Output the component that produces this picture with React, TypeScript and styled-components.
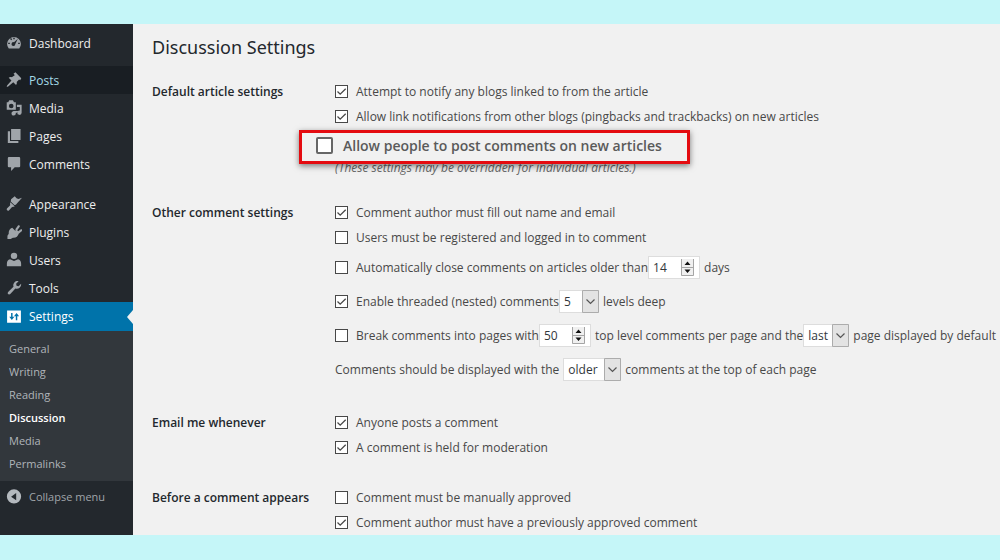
import React, { useId } from "react";
import styled, { createGlobalStyle, css } from "styled-components";

const GlobalStyle = createGlobalStyle`
  *, *::before, *::after { box-sizing: border-box; }
  body {
    margin: 0;
    background: #c5f6f8;
    color: #484848;
    font-family: "Open Sans", "Noto Sans", sans-serif;
    font-size: 12px;
  }
`;

const Page = styled.div`
  display: flex;
  min-height: 100vh;
  padding: 24px 0 25px;
`;

const Sidebar = styled.nav`
  flex: none;
  width: 133px;
  padding-top: 5px;
  background: #23282d;
`;

const MenuGroup = styled.ul<{ $gap: number }>`
  list-style: none;
  margin: 0 0 ${(p) => p.$gap}px;
  padding: 0;
`;

const MenuLink = styled.a<{ $state?: "hover" | "current" }>`
  position: relative;
  display: flex;
  align-items: center;
  gap: 7px;
  height: 28px;
  padding-left: 6px;
  color: #eee;
  text-decoration: none;
  svg { color: #a0a5aa; }
  ${(p) => p.$state === "hover" && css`
    background: #191e23;
    color: #a4dbe8;
  `}
  ${(p) => p.$state === "current" && css`
    height: 29px;
    background: #0073aa;
    color: #fff;
    svg { color: #fff; }
    &::after {
      content: "";
      position: absolute;
      right: 0;
      border: 7px solid transparent;
      border-left: 0;
      border-right: 6px solid #f1f1f1;
    }
  `}
`;

const SubMenu = styled.ul`
  list-style: none;
  margin: 0;
  padding: 6px 0 6px 9px;
  background: #32373c;
  font-size: 11px;
  line-height: 23px;
`;

const SubLink = styled.a<{ $current?: boolean }>`
  color: ${(p) => (p.$current ? "#fff" : "#b0b5ba")};
  font-weight: ${(p) => (p.$current ? 600 : 400)};
  text-decoration: none;
`;

const CollapseButton = styled.button`
  display: flex;
  align-items: center;
  gap: 7px;
  height: 31px;
  width: 100%;
  padding: 0 0 0 6px;
  border: 0;
  background: none;
  color: #a0a5aa;
  font: inherit;
  font-size: 11px;
  svg { color: #b4b9be; }
`;

const Content = styled.main`
  flex: 1;
  min-width: 0;
  padding: 11px 0 0 19px;
  background: #f1f1f1;
`;

const Title = styled.h1`
  margin: 0 0 20px;
  color: #23282d;
  font-family: "Noto Sans", sans-serif;
  font-size: 18px;
  font-weight: 400;
  line-height: 24px;
`;

const Section = styled.section<{ $gap?: number }>`
  display: grid;
  grid-template-columns: 183px 1fr;
  margin-bottom: ${(p) => p.$gap ?? 0}px;
`;

const SectionTitle = styled.h2`
  margin: 0;
  color: #23282d;
  font-size: 12px;
  font-weight: 600;
  line-height: 25px;
`;

const Row = styled.div<{ $tall?: boolean }>`
  display: flex;
  align-items: center;
  height: ${(p) => (p.$tall ? 34 : 25)}px;
  white-space: nowrap;
`;

const OptionLabel = styled.label`
  display: flex;
  align-items: center;
  gap: 8px;
`;

const BoxWrap = styled.span<{ $size: number }>`
  position: relative;
  display: block;
  width: ${(p) => p.$size}px;
  height: ${(p) => p.$size}px;
  input {
    appearance: none;
    display: block;
    width: 100%;
    height: 100%;
    margin: 0;
    border: ${(p) => (p.$size > 13 ? 2 : 1)}px solid ${(p) => (p.$size > 13 ? "#666" : "#484848")};
    border-radius: ${(p) => (p.$size > 13 ? 2 : 0)}px;
    background: #fff;
  }
  svg {
    position: absolute;
    inset: 0;
    pointer-events: none;
    visibility: hidden;
  }
  input:checked + svg { visibility: visible; }
`;

const HighlightRow = styled.div`
  position: relative;
  height: 27px;
`;

const Highlight = styled.label`
  position: absolute;
  top: 1px;
  left: -36px;
  display: flex;
  align-items: center;
  gap: 10px;
  width: 391px;
  height: 34px;
  padding: 0 0 4px 14px;
  border: 3px solid #e40b10;
  background: #f1f1f1;
  box-shadow: 0 2px 6px rgba(0, 0, 0, 0.5);
  color: #5a5a5a;
  font-size: 14px;
  font-weight: 600;
  white-space: nowrap;
`;

const Note = styled.p`
  margin: 0;
  color: #666;
  font-style: italic;
  line-height: 24px;
`;

const Field = styled.span<{ $width: number; $left?: number; $right?: number }>`
  position: relative;
  display: block;
  width: ${(p) => p.$width}px;
  height: 23px;
  margin: 0 ${(p) => p.$right ?? 4}px 0 ${(p) => p.$left ?? 0}px;
  input, select {
    appearance: none;
    display: block;
    width: 100%;
    height: 100%;
    margin: 0;
    padding: 0 4px;
    border: 1px solid #ddd;
    border-radius: 0;
    background: #fff;
    color: #32373c;
    font: inherit;
  }
  input { appearance: textfield; }
  input::-webkit-inner-spin-button { appearance: none; margin: 0; }
  svg {
    position: absolute;
    pointer-events: none;
  }
`;

const ICONS: Record<string, React.ReactNode> = {
  dashboard: (
    <path fillRule="evenodd" d="M2.800 18A9.500 9.500 0 1 1 17.200 18ZM9 3.200v2.300h2V3.200ZM4.600 5l1.600 1.600 1.300-1.300L5.900 3.700ZM2 10v2h2.300v-2ZM15.700 10v2H18v-2ZM15.300 4.600 10 9.400a2.600 2.600 0 1 0 1.800 2.400Z" />
  ),
  posts: <path d="M10.400 3 9.300 1.900 12 0l8 8-1.500 2.700-1.500-1-3.300 3.600c.5 1.600.1 3-.9 4.200l-3.800-3.800L2 19.500l-2 .5.500-2L6.500 11.200 2.700 7.400C3.900 6.400 5.400 6.100 6.900 6.600L11 4Z" />,
  media: (
    <path fillRule="evenodd" d="M0 2.500h2L3.500 0h5L10 2.500h2.500V13H0ZM6.200 4.500a3.200 3.200 0 1 0 0 6.400 3.200 3.200 0 0 0 0-6.400ZM14 6h6.500v11a3 3 0 1 1-2.500-3V9h-4ZM9 14.500h6V17h-2.500v1a3 3 0 1 1-3.500-3Z" />
  ),
  pages: <path d="M6 1h13v15H6ZM1.500 4h3v13.500h11.500v2.500h-14.500Z" />,
  comments: <path d="M3 1h14A1.500 1.500 0 0 1 18.500 2.500v11a1.500 1.500 0 0 1-1.500 1.500H11l-5 5v-5H3A1.500 1.500 0 0 1 1.500 13.500v-11A1.500 1.500 0 0 1 3 1Z" />,
  appearance: <path d="M6 4 11 0l2.500 2.500L16 3.500 21 2l-8.500 9.500-2 .5L5.500 7ZM5 8l6 5.500c-1.500 1.200-3 .5-4 1.500l-4 4.500c-1.500 1.300-4-1-2.700-2.700L4.500 12.500c.8-1-.5-2.500.5-4.500Z" />,
  plugins: <path d="m12 6.500 3.500-5c1-1.200 3.200.3 2.400 1.700l-3.400 5 1.300 1.300 3.700-2.700c1.300-.8 2.800 1.100 1.700 2.200l-4.700 4c-1 3.500-4 6-8 5.500L5.400 20H1v-4.500L2.800 13c-.5-3.500 1.200-6.800 4.800-8.200L12 9.200Z" />,
  users: <path d="M10 9.200a4.400 4.400 0 1 0 0-8.800 4.400 4.400 0 0 0 0 8.800ZM4.500 9.500 10 12l5.500-2.500c2.700.5 4.300 3 4.300 6V19H.2v-3.500c0-3 1.600-5.500 4.300-6Z" />,
  tools: <path d="M17.700 10c-1.500 1.500-3.800 2-5.800 1.300l-7 7.500c-2 1.900-4.900-.8-3-2.900l7.400-7.200C8.600 6.700 9 4.400 10.500 2.900 12.100 1.200 14.300.7 16.300 1.200L12.900 4.600l.6 2.900 2.900.6L19.700 4.800c.5 1.900-.3 3.700-2 5.200Z" />,
  settings: (
    <path fillRule="evenodd" d="M.5 1.500h19v17H.5ZM6 5v5H3.500L7 14.500 10.500 10H8V5ZM12.500 15V9.500H10L13.500 5 17 9.500h-2.500V15Z" />
  ),
  collapse: <path fillRule="evenodd" d="M10 0a9.800 9.800 0 1 1 0 19.600A9.800 9.800 0 0 1 10 0ZM13 5 6 10l7 5Z" />,
};

function Icon({ name }: { name: string }) {
  return (
    <svg width="16" height="16" viewBox="-1 0 22 21" fill="currentColor" aria-hidden="true">
      {ICONS[name]}
    </svg>
  );
}

type Item = { label: string; icon: string; state?: "hover" | "current" };

const GROUPS: { gap: number; items: Item[] }[] = [
  { gap: 9, items: [{ label: "Dashboard", icon: "dashboard" }] },
  {
    gap: 12,
    items: [
      { label: "Posts", icon: "posts", state: "hover" },
      { label: "Media", icon: "media" },
      { label: "Pages", icon: "pages" },
      { label: "Comments", icon: "comments" },
    ],
  },
  {
    gap: 0,
    items: [
      { label: "Appearance", icon: "appearance" },
      { label: "Plugins", icon: "plugins" },
      { label: "Users", icon: "users" },
      { label: "Tools", icon: "tools" },
      { label: "Settings", icon: "settings", state: "current" },
    ],
  },
];

const SUBMENU = ["General", "Writing", "Reading", "Discussion", "Media", "Permalinks"];

function CheckBox({ checked, size = 13 }: { checked?: boolean; size?: number }) {
  return (
    <BoxWrap $size={size}>
      <input type="checkbox" defaultChecked={checked} />
      <svg viewBox="0 0 13 13" fill="none" stroke="#484848" strokeWidth="1.3" aria-hidden="true">
        <path d="M2.500 6.500 5.200 9.200 10.700 3.700" />
      </svg>
    </BoxWrap>
  );
}

function Option({ checked, children }: { checked?: boolean; children: React.ReactNode }) {
  return (
    <OptionLabel>
      <CheckBox checked={checked} />
      {children}
    </OptionLabel>
  );
}

const Spinner = styled.svg`
  top: 3px;
  right: 6px;
`;

const Arrow = styled.svg`
  top: 0;
  right: 0;
`;

type FieldProps = { label: string; value: string; width: number; left?: number; right?: number };

function NumberField({ label, value, width, left, right }: FieldProps) {
  return (
    <Field $width={width} $left={left} $right={right}>
      <input type="number" aria-label={label} defaultValue={value} />
      <Spinner width="13" height="17" viewBox="0 0 13 17" aria-hidden="true">
        <path d="M0 0h13v17H0Z" fill="#f0f0f0" />
        <path d="M.5 0v16.500h12V0M0 8.500h13" fill="none" stroke="#a5a5a5" />
        <path d="M6.500 2.500 9.500 6h-6ZM6.500 14 9.500 10.500h-6Z" fill="#111" />
      </Spinner>
    </Field>
  );
}

function SelectField({ label, value, width, left, right }: FieldProps) {
  return (
    <Field $width={width} $left={left} $right={right}>
      <select aria-label={label} defaultValue={value}>
        <option>{value}</option>
      </select>
      <Arrow width="17" height="23" viewBox="0 0 17 23" aria-hidden="true">
        <path d="M.5.5h16v22H.5Z" fill="#e3e3e3" stroke="#acacac" />
        <path d="m4.500 9.500 4 4 4-4" fill="none" stroke="#555" strokeWidth="1.200" />
      </Arrow>
    </Field>
  );
}

function Group({ title, gap, children }: { title: string; gap?: number; children: React.ReactNode }) {
  const id = useId();
  return (
    <Section $gap={gap} aria-labelledby={id}>
      <SectionTitle id={id}>{title}</SectionTitle>
      <div>{children}</div>
    </Section>
  );
}

export default function App() {
  return (
    <>
      <GlobalStyle />
      <Page>
        <Sidebar>
          {GROUPS.map((group) => (
            <MenuGroup key={group.items[0].label} $gap={group.gap}>
              {group.items.map((item) => (
                <li key={item.label}>
                  <MenuLink href="#" $state={item.state}>
                    <Icon name={item.icon} />
                    {item.label}
                  </MenuLink>
                </li>
              ))}
            </MenuGroup>
          ))}
          <SubMenu>
            {SUBMENU.map((label) => (
              <li key={label}>
                <SubLink href="#" $current={label === "Discussion"}>{label}</SubLink>
              </li>
            ))}
          </SubMenu>
          <CollapseButton type="button">
            <Icon name="collapse" />
            Collapse menu
          </CollapseButton>
        </Sidebar>
        <Content>
          <Title>Discussion Settings</Title>
          <Group title="Default article settings" gap={20}>
            <Row><Option checked>Attempt to notify any blogs linked to from the article</Option></Row>
            <Row><Option checked>Allow link notifications from other blogs (pingbacks and trackbacks) on new articles</Option></Row>
            <HighlightRow>
              <Highlight>
                <CheckBox size={17} />
                Allow people to post comments on new articles
              </Highlight>
            </HighlightRow>
            <Note>(These settings may be overridden for individual articles.)</Note>
          </Group>
          <Group title="Other comment settings" gap={24}>
            <Row><Option checked>Comment author must fill out name and email</Option></Row>
            <Row><Option>Users must be registered and logged in to comment</Option></Row>
            <Row $tall>
              <Option>Automatically close comments on articles older than</Option>
              <NumberField label="Days before comments close" value="14" width={52} />
              days
            </Row>
            <Row $tall>
              <Option checked>Enable threaded (nested) comments</Option>
              <SelectField label="Nesting levels" value="5" width={40} />
              levels deep
            </Row>
            <Row $tall>
              <Option>Break comments into pages with</Option>
              <NumberField label="Comments per page" value="50" width={52} />
              top level comments per page and the
              <SelectField label="Default page" value="last" width={46} />
              page displayed by default
            </Row>
            <Row $tall>
              Comments should be displayed with the
              <SelectField label="Comment order" value="older" width={58} left={4} />
              comments at the top of each page
            </Row>
          </Group>
          <Group title="Email me whenever" gap={25}>
            <Row><Option checked>Anyone posts a comment</Option></Row>
            <Row><Option checked>A comment is held for moderation</Option></Row>
          </Group>
          <Group title="Before a comment appears">
            <Row><Option>Comment must be manually approved</Option></Row>
            <Row><Option checked>Comment author must have a previously approved comment</Option></Row>
          </Group>
        </Content>
      </Page>
    </>
  );
}
